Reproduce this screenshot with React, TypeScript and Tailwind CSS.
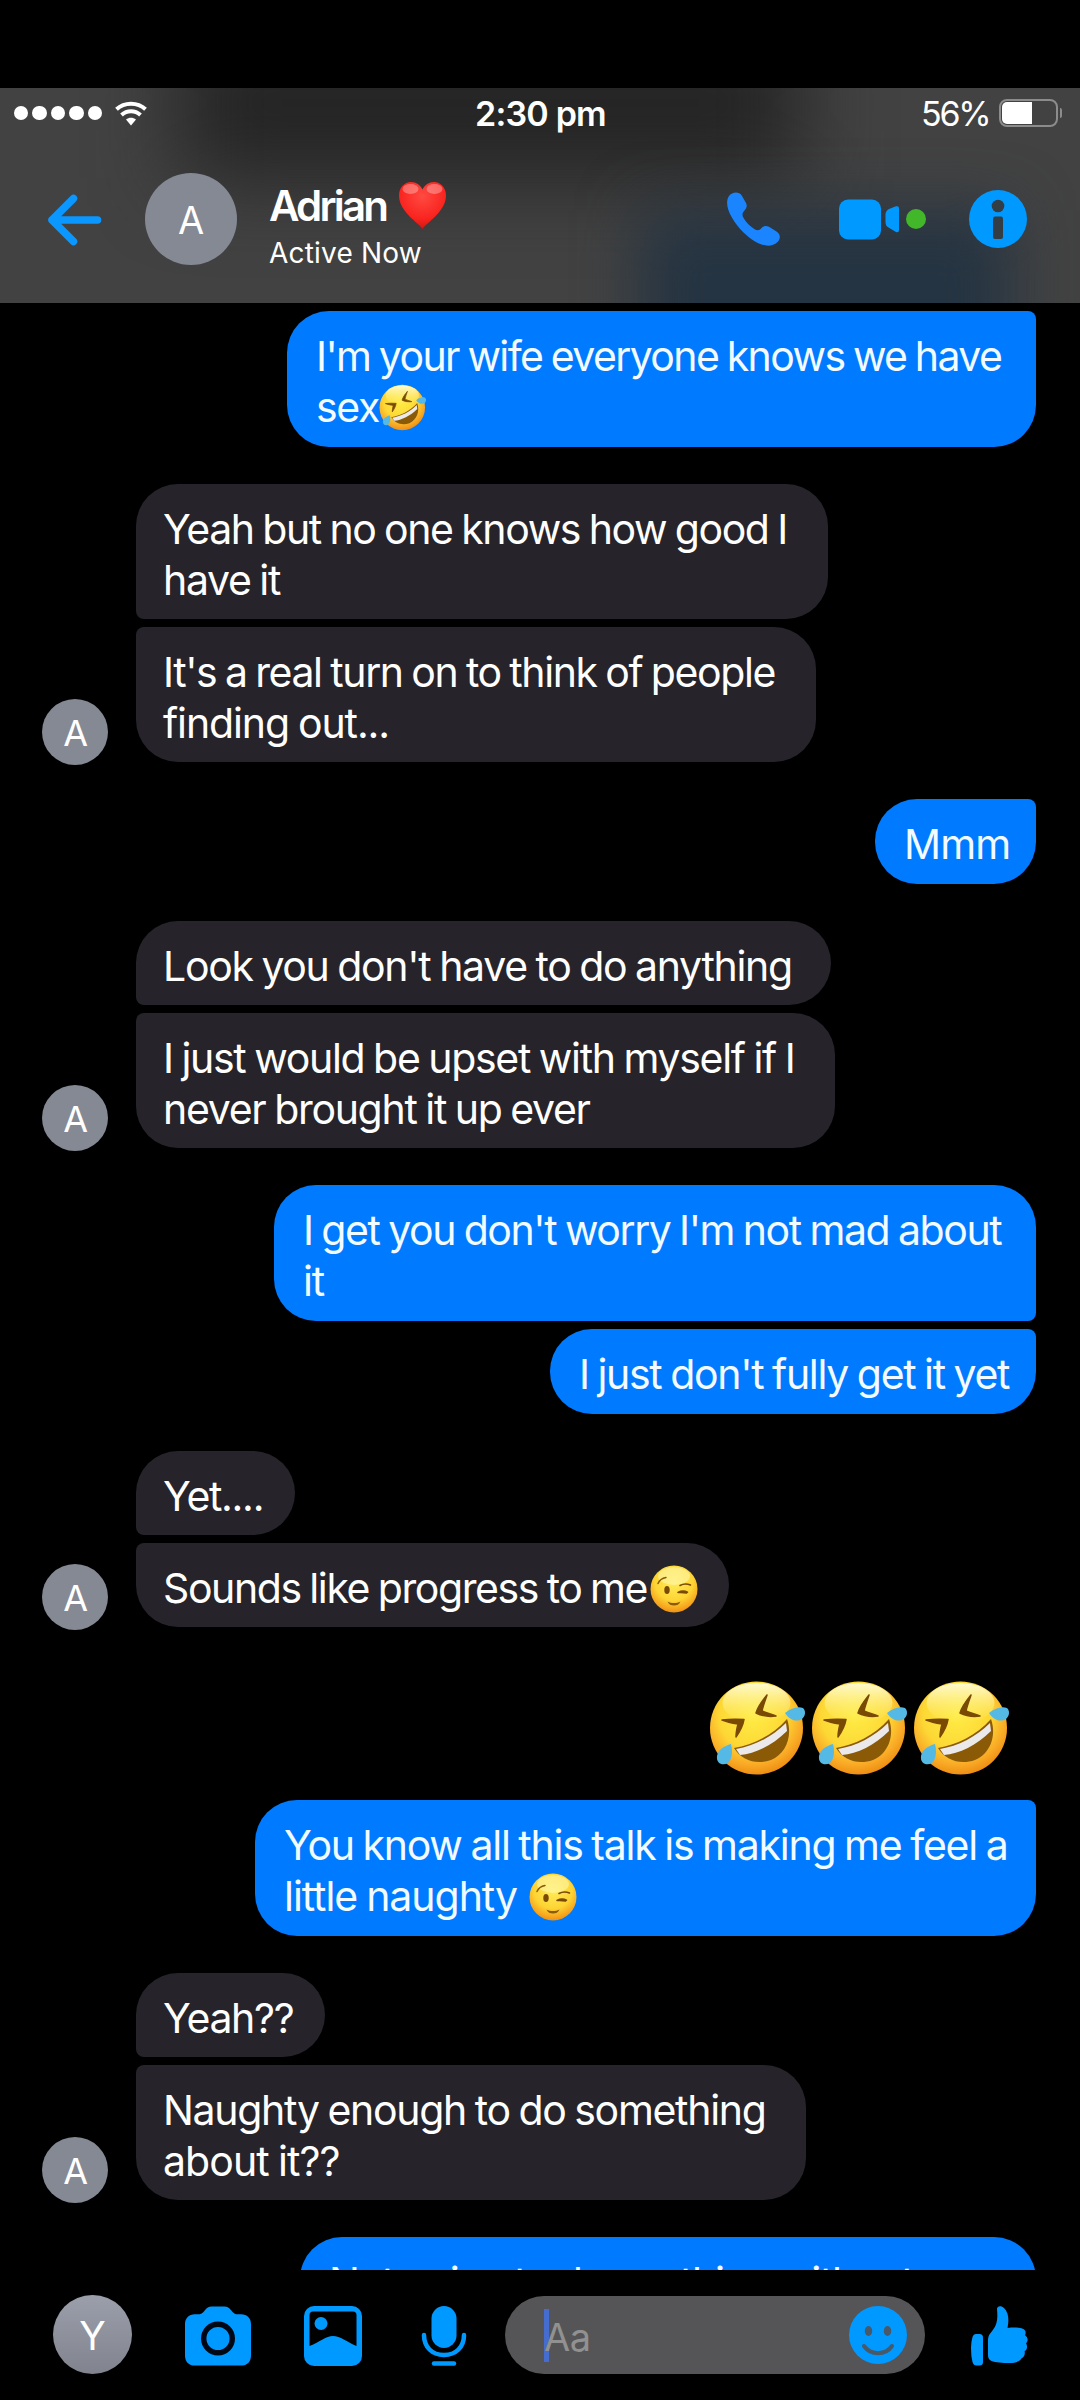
import type { ReactNode } from "react";

type IconProps = {
  className?: string;
};

function RoflEmoji({ className }: IconProps) {
  return (
    <svg viewBox="0 0 102 96" className={className}>
      <defs>
        <radialGradient id="rofl" cx="0.46" cy="0.36" r="0.66">
          <stop offset="0" stopColor="#ffec45" />
          <stop offset="0.55" stopColor="#fdd835" />
          <stop offset="0.82" stopColor="#f9a825" />
          <stop offset="1" stopColor="#ec8a10" />
        </radialGradient>
        <linearGradient id="shine" x1="0" y1="0" x2="0" y2="1">
          <stop offset="0" stopColor="#fffbd2" />
          <stop offset="1" stopColor="#fff27a" stopOpacity="0" />
        </linearGradient>
      </defs>
      <circle cx="47.500" cy="48" r="46.500" fill="url(#rofl)" />
      <ellipse cx="47.500" cy="23" rx="34" ry="20" fill="url(#shine)" />
      <path d="M25 68c18-3 38-12 53-29 6 17-1 35-16 41-14 5-29 1-37-12Z" fill="#8a5a07" />
      <path d="M27 69c18-3 36-12 50-26l1 8C64 65 46 74 31 75Z" fill="#ece9ea" />
      <path d="M13 40c8-1 15-1 22-.500-1 6-4 12-8 17.500 0-5 1-9 2-13-6-1-11-2-16-4Z" fill="#7a4a05" stroke="#7a4a05" strokeWidth="1.500" strokeLinejoin="round" />
      <path d="M58 15c-4 5-9 11-11 18 6 3 13 4 20 3-5-2-10-3-14-5 1-5 3-10 5-16Z" fill="#7a4a05" stroke="#7a4a05" strokeWidth="1.500" strokeLinejoin="round" />
      <path d="M76 33c6-5 13-7 18-5 4 3 2 12-5 12.500-6 .500-10-3-13-7.500Z" fill="#55b9e6" />
      <path d="M22 64c-7 2-13 6-14 12-1 8 6 10 11 7 4-4 5-11 3-19Z" fill="#55b9e6" />
    </svg>
  );
}

function WinkEmoji({ className }: IconProps) {
  return (
    <svg viewBox="0 0 48 48" className={className}>
      <defs>
        <radialGradient id="wink" cx="0.5" cy="0.34" r="0.68">
          <stop offset="0" stopColor="#ffed5c" />
          <stop offset="0.6" stopColor="#fdd433" />
          <stop offset="0.86" stopColor="#f7a51f" />
          <stop offset="1" stopColor="#ec8d10" />
        </radialGradient>
      </defs>
      <circle cx="24" cy="24" r="23.500" fill="url(#wink)" />
      <ellipse cx="24" cy="11" rx="16" ry="9" fill="#fff6ac" opacity="0.6" />
      <path d="M8 18.500C9.500 15 12 13.200 16 12.500" fill="none" stroke="#8a5a07" strokeWidth="1.500" strokeLinecap="round" />
      <ellipse cx="17" cy="25" rx="2.700" ry="4" fill="#7a4a05" />
      <path d="M30 20.500c3.500-2 7-2 10.500-.500M37.500 27.200c-3-1.500-6-1.500-9.500.300 3-.300 6 0 8.500.500" fill="none" stroke="#7a4a05" strokeWidth="1.600" strokeLinecap="round" strokeLinejoin="round" />
      <path d="M17.500 36.500c4 2 9 2 13 0-1.500 3-3.500 4-6.500 4s-5-1-6.500-4Z" fill="#8a5a07" />
    </svg>
  );
}

function HeartEmoji({ className }: IconProps) {
  return (
    <svg viewBox="0 0 49 49" className={className}>
      <defs>
        <radialGradient id="heart" cx="0.5" cy="0.3" r="0.75">
          <stop offset="0" stopColor="#ff4a42" />
          <stop offset="0.65" stopColor="#f9241f" />
          <stop offset="1" stopColor="#c9130f" />
        </radialGradient>
      </defs>
      <path d="M24.500 48C21 42 1 31 1 14.500 1 6.500 6.500 1 13 1c5 0 9.500 3 11.500 7.500C26.500 4 31 1 36 1c6.500 0 12 5.500 12 13.500C48 31 28 42 24.500 48Z" fill="url(#heart)" />
      <ellipse cx="12.500" cy="8" rx="8" ry="5" fill="#fff" opacity="0.3" />
      <ellipse cx="36.500" cy="8" rx="8" ry="5" fill="#fff" opacity="0.3" />
    </svg>
  );
}

function StatusBar() {
  return (
    <div className="relative flex h-[50px] items-center pl-[14px] pr-[18px] text-white">
      <div className="flex w-[461px] items-center">
        <div className="flex gap-[4px]">
          {[0, 1, 2, 3, 4].map((dot) => (
            <span key={dot} className="h-[14.400px] w-[14.400px] rounded-full bg-white" />
          ))}
        </div>
        <svg viewBox="0 0 32 25" className="ml-[13px] h-[25px] w-[32px]" fill="none" stroke="#fff" strokeWidth="4">
          <path d="M1.500 8.200C9.500.8 22.500.8 30.500 8.200" />
          <path d="M6.500 14c5.500-5 13.500-5 19 0" />
          <path d="M11 18.600c3-2.600 7-2.600 10 0L16 24.500Z" fill="#fff" stroke="none" />
        </svg>
      </div>
      <p className="w-[446px] text-[34px] font-semibold tracking-[-0.800px] whitespace-nowrap">2:30 pm</p>
      <p className="w-[71px] text-[34px] tracking-[-2.200px] whitespace-nowrap">56%</p>
      <div className="ml-[7px] flex items-center">
        <div className="h-[28px] w-[59px] rounded-[8px] border-2 border-[#8c8c8c] p-px">
          <div className="h-full w-[30px] rounded-l-[5px] bg-white" />
        </div>
        <span className="ml-[2px] h-[10px] w-[2px] rounded-r bg-[#8c8c8c]" />
      </div>
    </div>
  );
}

function Header() {
  return (
    <header className="relative h-[215px] shrink-0 overflow-hidden bg-[#424242]">
      <div className="absolute -top-[60px] left-[180px] h-[150px] w-[620px] bg-[#242424] blur-[42px]" />
      <div className="absolute top-[122px] left-[640px] h-[190px] w-[370px] bg-[#253442] blur-[30px]" />
      <StatusBar />
      <div className="relative mt-[35px] flex h-[92px] items-center pl-[47px]">
        <svg viewBox="0 0 55 52" className="mt-[2px] h-[52px] w-[55px]" fill="none" stroke="#0a97ff" strokeWidth="7.500" strokeLinecap="round" strokeLinejoin="round">
          <path d="M50.500 26H5M26.500 4.500 5 26l21.500 21.500" />
        </svg>
        <div className="ml-[43px] flex h-[92px] w-[92px] items-center justify-center rounded-full bg-[#858994] pt-[2px] text-[38px] text-white">
          <span>A</span>
        </div>
        <div className="ml-[32px] w-[458px] pt-[11px] text-white">
          <div className="flex h-[54px] items-center">
            <span className="text-[42px] font-semibold tracking-[-2.800px]">Adrian</span>
            <HeartEmoji className="ml-[12px] h-[49px] w-[49px]" />
          </div>
          <p className="mt-[3px] h-[36px] text-[28px] leading-[36px] tracking-[0.200px]">Active Now</p>
        </div>
        <svg viewBox="0 0 54 54" className="h-[54px] w-[54px]" fill="#1a85ff">
          <path d="M2 4C5 0 12-1 15 4l4 7c1.500 3 .5 5.500-1.500 7.500-2 2-2.500 4-1.500 6.500 3 5.500 6.500 9 12 12.500 2.500 1.300 4.800.8 6.300-1.200 2-2.500 4.700-3 7.700-1.500l7.500 4.700c4.500 3 4 7.500 1 10.500-8.500 8-22 2-34-9.500C5 29-4 13 2 4Z" />
        </svg>
        <svg viewBox="0 0 61 41" className="ml-[58px] h-[41px] w-[61px]" fill="#0099ff">
          <rect x="0" y="0.500" width="42" height="40" rx="9" />
          <path d="M50 10 57 7.300Q60 6.500 60 9.500V31Q60 34 57 33L49.500 28.500Q46.500 26.500 46.500 23V15.500Q46.500 12 50 10Z" />
        </svg>
        <span className="ml-[6px] h-[20px] w-[20px] rounded-full bg-[#42b72a]" />
        <svg viewBox="0 0 58 58" className="ml-[43px] h-[58px] w-[58px]">
          <circle cx="29" cy="29" r="29" fill="#0099ff" />
          <circle cx="29" cy="16" r="6.300" fill="#333d46" />
          <rect x="24" y="26.500" width="10" height="22.500" rx="2" fill="#333d46" />
        </svg>
      </div>
    </header>
  );
}

type BubbleProps = {
  className: string;
  children: ReactNode;
};

function Sent({ className, children }: BubbleProps) {
  return (
    <div className={`mr-[44px] shrink-0 self-end rounded-[42px] bg-[#007aff] pt-[20px] pl-[29px] whitespace-nowrap text-[#f2fbff] ${className}`}>
      {children}
    </div>
  );
}

function Received({ className, children }: BubbleProps) {
  return (
    <div className={`ml-[136px] shrink-0 self-start rounded-[42px] bg-[#26242a] pt-[20px] pl-[27px] whitespace-nowrap text-white ${className}`}>
      {children}
    </div>
  );
}

// Last bubble of an incoming group, with the sender's avatar at its foot
function ReceivedLast({ className, children }: BubbleProps) {
  return (
    <div className="mt-[8px] flex shrink-0 items-end">
      <div className="-mb-[3px] ml-[42px] flex h-[66px] w-[66px] items-center justify-center rounded-full bg-[#858994] pt-[3px] text-[36px] text-white">
        <span>A</span>
      </div>
      <div className={`ml-[28px] rounded-[42px] rounded-tl-[8px] bg-[#26242a] pt-[20px] pl-[27px] whitespace-nowrap text-white ${className}`}>
        {children}
      </div>
    </div>
  );
}

function Messages() {
  return (
    <main className="flex h-[1967px] shrink-0 flex-col overflow-hidden pt-[8px] text-[41px] leading-[51px] tracking-[-1.300px] [word-spacing:-1.5px]">
      <Sent className="h-[136px] w-[749px] rounded-tr-[8px]">
        <p className="tracking-[-1.600px]">I'm your wife everyone knows we have</p>
        <p className="flex items-center">
          sex
          <RoflEmoji className="h-[47px] w-[50px]" />
        </p>
      </Sent>

      <Received className="mt-[37px] h-[135px] w-[692px] rounded-bl-[8px]">
        <p className="tracking-[-1.400px]">Yeah but no one knows how good I</p>
        <p>have it</p>
      </Received>
      <ReceivedLast className="h-[135px] w-[680px]">
        <p className="tracking-[-1.400px]">It's a real turn on to think of people</p>
        <p className="tracking-[-1.100px]">finding out...</p>
      </ReceivedLast>

      <Sent className="mt-[37px] h-[85px] w-[161px] rounded-tr-[8px]">
        <p className="tracking-[-0.800px]">Mmm</p>
      </Sent>

      <Received className="mt-[37px] h-[84px] w-[695px] rounded-bl-[8px]">
        <p>Look you don't have to do anything</p>
      </Received>
      <ReceivedLast className="h-[135px] w-[699px]">
        <p>I just would be upset with myself if I</p>
        <p>never brought it up ever</p>
      </ReceivedLast>

      <Sent className="mt-[37px] h-[136px] w-[762px] rounded-br-[8px]">
        <p className="tracking-[-1.400px]">I get you don't worry I'm not mad about</p>
        <p>it</p>
      </Sent>
      <Sent className="mt-[8px] h-[85px] w-[486px] rounded-tr-[8px]">
        <p>I just don't fully get it yet</p>
      </Sent>

      <Received className="mt-[37px] h-[84px] w-[159px] rounded-bl-[8px]">
        <p>Yet....</p>
      </Received>
      <ReceivedLast className="h-[84px] w-[593px]">
        <p className="flex items-center tracking-[-1.400px]">
          Sounds like progress to me
          <WinkEmoji className="ml-[3px] h-[48px] w-[48px]" />
        </p>
      </ReceivedLast>

      <div className="mt-[53px] mr-[65px] flex h-[96px] shrink-0 justify-end">
        <RoflEmoji className="h-[96px] w-[102px]" />
        <RoflEmoji className="h-[96px] w-[102px]" />
        <RoflEmoji className="h-[96px] w-[102px]" />
      </div>

      <Sent className="mt-[24px] h-[136px] w-[781px] rounded-tr-[8px]">
        <p className="tracking-[-1.250px]">You know all this talk is making me feel a</p>
        <p className="flex items-center tracking-[-1.050px]">
          little naughty
          <WinkEmoji className="ml-[12px] h-[48px] w-[48px]" />
        </p>
      </Sent>

      <Received className="mt-[37px] h-[84px] w-[189px] rounded-bl-[8px]">
        <p>Yeah??</p>
      </Received>
      <ReceivedLast className="h-[135px] w-[670px]">
        <p>Naughty enough to do something</p>
        <p className="tracking-[-0.900px]">about it??</p>
      </ReceivedLast>

      <Sent className="mt-[37px] h-[136px] w-[736px]">
        <p>Not going to do anything without you</p>
      </Sent>
    </main>
  );
}

function Composer() {
  return (
    <footer className="flex h-[130px] shrink-0 items-start bg-black pt-[25px] pl-[53px]">
      <div className="flex h-[79px] w-[79px] items-center justify-center rounded-full bg-linear-to-b from-[#9b9fab] to-[#81848e] pt-[3px] text-[39px] text-white">
        <span>Y</span>
      </div>
      <svg viewBox="0 0 67 60" className="mt-[11px] ml-[53px] h-[60px] w-[66px]" fill="#0099ff">
        <path d="M10 8h3c3 0 5-1 7-4 2-2.500 4-4 7-4h13c3 0 5 1.500 7 4 2 3 4 4 7 4h3c6 0 10 4 10 10v32c0 6-4 10-10 10H10C4 60 0 56 0 50V18C0 12 4 8 10 8Z" />
        <circle cx="33.500" cy="32.500" r="14.500" fill="none" stroke="#000816" strokeWidth="5.500" />
      </svg>
      <svg viewBox="0 0 58 60" className="mt-[11px] ml-[53px] h-[60px] w-[58px]">
        <rect width="58" height="60" rx="10" fill="#0099ff" />
        <path d="M9 5.500h40q3.500 0 3.500 3.500v31C43 36 36 30 29 30S16 36 5.500 40V9Q5.500 5.500 9 5.500Z" fill="#000" />
        <circle cx="17" cy="17.500" r="6.500" fill="#0099ff" />
      </svg>
      <svg viewBox="0 0 46 60" className="mt-[11px] ml-[59px] h-[60px] w-[46px]" fill="none" stroke="#0099ff" strokeWidth="4.500" strokeLinecap="round">
        <rect x="10.500" width="25" height="42" rx="12.500" fill="#0099ff" stroke="none" />
        <path d="M3 29c0 12 8 20 20 20s20-8 20-20" />
        <path d="M13 57.500h20" />
      </svg>
      <div className="mt-[1px] ml-[38px] flex h-[78px] w-[420px] items-center rounded-full bg-[#555557] pl-[39px]">
        <span className="h-[53px] w-[5px] bg-[#456ccf]" />
        <span className="-ml-[5px] w-[305px] pt-[4px] text-[38px] tracking-[-0.500px] text-[#919191]">Aa</span>
        <svg viewBox="0 0 58 58" className="h-[58px] w-[58px]">
          <circle cx="29" cy="29" r="29" fill="#0099ff" />
          <ellipse cx="19.500" cy="25" rx="3.700" ry="5" fill="#48596a" />
          <ellipse cx="38.500" cy="25" rx="3.700" ry="5" fill="#48596a" />
          <path d="M15 40c6.500 9.500 21.500 9.500 28 0" fill="none" stroke="#48596a" strokeWidth="4" strokeLinecap="round" />
        </svg>
      </div>
      <svg viewBox="0 0 57 60" className="mt-[11px] ml-[46px] h-[60px] w-[57px]" fill="#0099ff">
        <path d="M5 28h3.500Q12 28 12 31.500V56Q12 59.500 8.500 59.500H5.500Q2.500 59.500 1.500 56 0 50 0 42 0 36 1.500 31 2.500 28 5 28Z" />
        <path d="M26 3c0-3 4-4 7-1 5 5 5 12 3.500 20 6-.8 10-.6 14 .3 4 1 5 4 3.500 7 3 2 3.500 5.500 1 8 2 3 1 6.500-1.500 8 1 3-.5 5.500-3 7-2 3.500-6 4.700-12 4.700-7 0-14-.5-18-2-2.500-1-3.500-3-3.500-6V34c0-4 1.500-6 4.500-9.500C26 19 27 13 26 3Z" />
      </svg>
    </footer>
  );
}

export default function App() {
  return (
    <div className="flex h-[2400px] w-[1080px] flex-col overflow-hidden bg-black pt-[88px] font-['Inter','Liberation_Sans',sans-serif]">
      <Header />
      <Messages />
      <Composer />
    </div>
  );
}
